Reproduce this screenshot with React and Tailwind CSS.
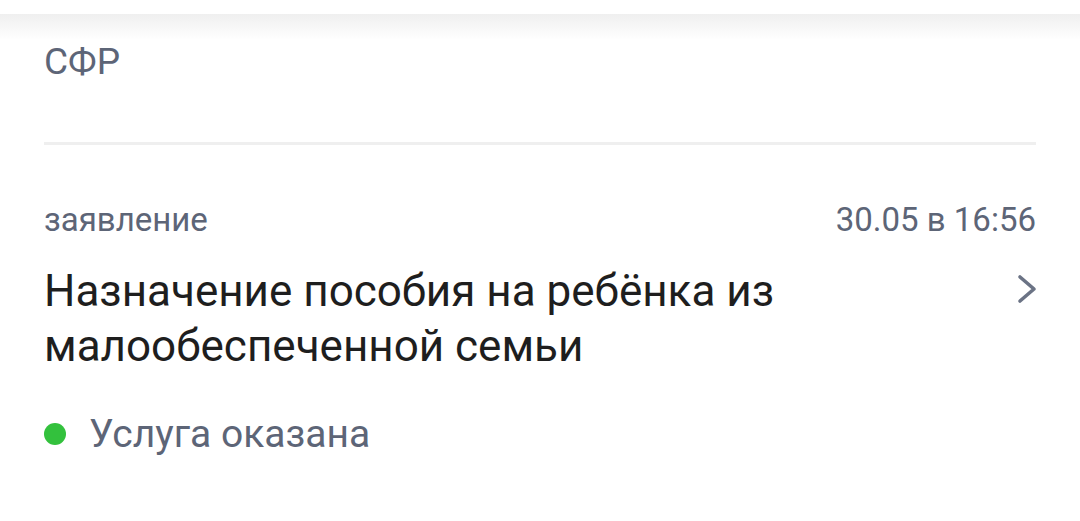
import React from 'react';

export default function App() {
  return (
    <div className="w-[1080px] h-[521px] bg-white overflow-hidden" style={{ fontFamily: 'Roboto, "Noto Sans", sans-serif' }}>
      <div className="h-[14px] bg-white" />
      <div className="h-[26px] bg-gradient-to-b from-[#efefef] to-white" />
      <div className="px-[44px]">
        <div className="h-[102px]">
          <p className="text-[37px] leading-[44px] text-[#5d6577]">СФР</p>
        </div>
        <div className="h-[3px] bg-[#efefef]" />
        <div className="pt-[55px] flex justify-between items-baseline">
          <span className="text-[33px] leading-[40px] text-[#5d6577]">заявление</span>
          <span className="text-[33px] leading-[40px] text-[#5d6577]">30.05 в 16:56</span>
        </div>
        <div className="mt-[24px] flex justify-between items-start">
          <p className="text-[44px] leading-[55px] text-[#1e1e1e] w-[820px]">
            Назначение пособия на ребёнка из малообеспеченной семьи
          </p>
          <svg width="20" height="32" viewBox="0 0 20 32" className="mt-[9px] -mr-[1px]" fill="none">
            <path d="M3 4 L17 16 L3 28" stroke="#6b7385" strokeWidth="3.6" strokeLinecap="round" strokeLinejoin="round" />
          </svg>
        </div>
        <div className="mt-[38px] flex items-center gap-[23px]">
          <span className="w-[22px] h-[22px] rounded-full bg-[#33c13d]" />
          <span className="text-[39px] leading-[44px] text-[#5d6577]">Услуга оказана</span>
        </div>
      </div>
    </div>
  );
}
